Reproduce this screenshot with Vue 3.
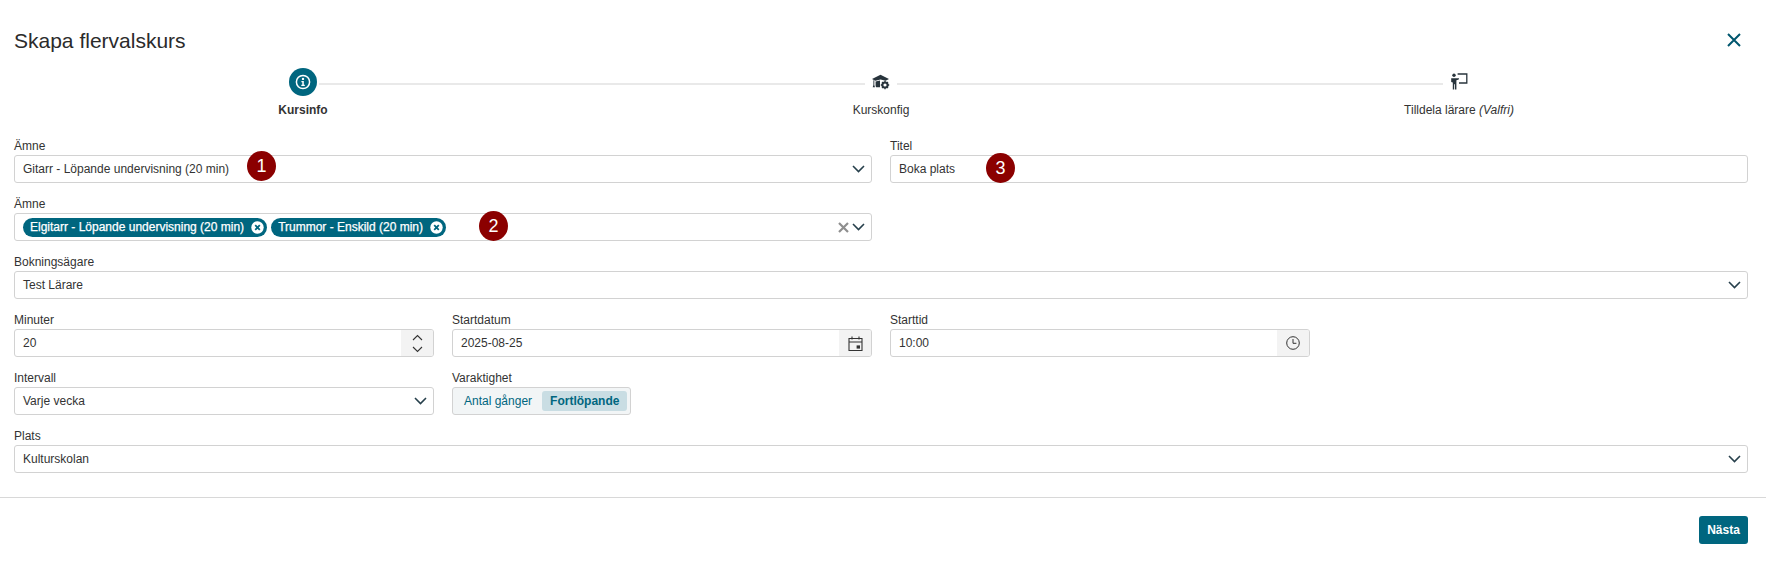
<script setup>
const steps = [
  { label: 'Kursinfo', icon: 'info', active: true },
  { label: 'Kurskonfig', icon: 'cap' },
  { label: 'Tilldela lärare', note: '(Valfri)', icon: 'teacher' },
]
const chips = ['Elgitarr - Löpande undervisning (20 min)', 'Trummor - Enskild (20 min)']
</script>

<template>
  <div class="page">
    <header class="head">
      <h1>Skapa flervalskurs</h1>
      <button class="close" aria-label="Stäng">
        <svg width="14" height="14" viewBox="0 0 14 14"><path d="M1 1l12 12M13 1L1 13" /></svg>
      </button>
    </header>

    <ol class="steps">
      <li v-for="(s, i) in steps" :key="s.label" class="step" :class="{ active: s.active }">
        <div class="marker">
          <span v-if="s.icon === 'info'" class="dot">
            <svg width="16" height="16" viewBox="0 0 16 16">
              <circle cx="8" cy="8" r="6.6" fill="none" stroke="#fff" stroke-width="1.5" />
              <circle cx="8" cy="4.9" r="1.2" fill="#fff" />
              <path d="M6.4 7h2.4v3.8h1v1.2H6.3v-1.2h1V8.2h-.9z" fill="#fff" />
            </svg>
          </span>
          <span v-else-if="s.icon === 'cap'" class="plain">
            <svg width="20" height="16" viewBox="0 0 20 16">
              <path d="M1 5 9.5 .8 18 5l-3.4 1.7-5.1-1.2-5.1 1.2L1 5z" fill="#28343c" />
              <path d="M4.6 7.4 9 6.5v6.7H5.2c-.4-.4-.6-.8-.6-1.4V7.4zM2.4 6.2h.9v4.8l.7 2.2H1.7l.7-2.2V6.2z" fill="#28343c" />
              <circle cx="14" cy="11" r="2.6" fill="none" stroke="#28343c" stroke-width="2" />
              <path d="M14 6.8v1.6M14 13.6v1.6M9.8 11h1.6M16.6 11h1.6M11 8l1.1 1.1M15.9 12.9 17 14M17 8l-1.1 1.1M12.1 12.9 11 14" stroke="#28343c" stroke-width="1.3" />
            </svg>
          </span>
          <span v-else class="plain teacher">
            <svg width="18" height="17" viewBox="0 0 18 17">
              <circle cx="4" cy="2.3" r="1.7" fill="#28343c" />
              <path d="M1.2 5.2h6.6l1-.3v1.5l-2.4.8v9.3H5v-5.3h-.8v5.3H2.8V9.4l-1.6-.4z" fill="#28343c" />
              <path d="M7.6 1h9.2v9H9" fill="none" stroke="#28343c" stroke-width="1.3" />
            </svg>
          </span>
          <span v-if="i < steps.length - 1" class="line"></span>
        </div>
        <div class="step-label">{{ s.label }} <em v-if="s.note">{{ s.note }}</em></div>
      </li>
    </ol>

    <form class="form" @submit.prevent>
      <div class="field span2">
        <label>Ämne</label>
        <div class="control select">
          <span class="value">Gitarr - Löpande undervisning (20 min)</span>
          <svg class="chev" width="13" height="8" viewBox="0 0 13 8"><path d="M1 1l5.5 5.5L12 1" /></svg>
        </div>
        <span class="mark m1">1</span>
      </div>
      <div class="field span2">
        <label>Titel</label>
        <div class="control"><span class="value">Boka plats</span></div>
        <span class="mark m3">3</span>
      </div>

      <div class="field span2">
        <label>Ämne</label>
        <div class="control select multi">
          <span class="chips">
            <span v-for="c in chips" :key="c" class="chip">
              {{ c }}
              <svg width="13" height="13" viewBox="0 0 13 13">
                <circle cx="6.5" cy="6.5" r="6.2" fill="#fff" />
                <path d="M4.2 4.2l4.6 4.6M8.8 4.2 4.2 8.8" stroke="#00667f" stroke-width="1.8" />
              </svg>
            </span>
          </span>
          <svg class="clear" width="11" height="11" viewBox="0 0 11 11"><path d="M1 1l9 9M10 1l-9 9" /></svg>
          <svg class="chev" width="13" height="8" viewBox="0 0 13 8"><path d="M1 1l5.5 5.5L12 1" /></svg>
        </div>
        <span class="mark m2">2</span>
      </div>
      <div class="field span2"></div>

      <div class="field span4">
        <label>Bokningsägare</label>
        <div class="control select">
          <span class="value">Test Lärare</span>
          <svg class="chev" width="13" height="8" viewBox="0 0 13 8"><path d="M1 1l5.5 5.5L12 1" /></svg>
        </div>
      </div>

      <div class="field">
        <label>Minuter</label>
        <div class="control addon-wrap">
          <span class="value">20</span>
          <span class="addon spin">
            <svg width="11" height="7" viewBox="0 0 11 7"><path d="M1 6l4.5-4.5L10 6" /></svg>
            <svg width="11" height="7" viewBox="0 0 11 7"><path d="M1 1l4.5 4.5L10 1" /></svg>
          </span>
        </div>
      </div>
      <div class="field">
        <label>Startdatum</label>
        <div class="control addon-wrap">
          <span class="value">2025-08-25</span>
          <span class="addon">
            <svg width="15" height="15" viewBox="0 0 15 15">
              <path d="M1 2.5h13v12H1zM1 6h13M4 .5v3M11 .5v3" fill="none" stroke="#333" stroke-width="1.1" />
              <rect x="8.6" y="9.4" width="3.4" height="3.2" fill="#333" />
            </svg>
          </span>
        </div>
      </div>
      <div class="field">
        <label>Starttid</label>
        <div class="control addon-wrap">
          <span class="value">10:00</span>
          <span class="addon">
            <svg width="14" height="14" viewBox="0 0 14 14">
              <circle cx="7" cy="7" r="6.3" fill="none" stroke="#333" stroke-width="1" />
              <path d="M7 3v4.3h3.4" fill="none" stroke="#333" stroke-width="1" />
            </svg>
          </span>
        </div>
      </div>
      <div class="field"></div>

      <div class="field">
        <label>Intervall</label>
        <div class="control select">
          <span class="value">Varje vecka</span>
          <svg class="chev" width="13" height="8" viewBox="0 0 13 8"><path d="M1 1l5.5 5.5L12 1" /></svg>
        </div>
      </div>
      <div class="field span3">
        <label>Varaktighet</label>
        <div class="segment">
          <span class="seg">Antal gånger</span>
          <span class="seg on">Fortlöpande</span>
        </div>
      </div>

      <div class="field span4">
        <label>Plats</label>
        <div class="control select">
          <span class="value">Kulturskolan</span>
          <svg class="chev" width="13" height="8" viewBox="0 0 13 8"><path d="M1 1l5.5 5.5L12 1" /></svg>
        </div>
      </div>
    </form>

    <footer class="foot">
      <button class="next">Nästa</button>
    </footer>
  </div>
</template>

<style>
html, body { margin: 0; background: #fff; }
</style>

<style scoped>
.page {
  font-family: "Liberation Sans", Arial, sans-serif;
  font-size: 12px;
  color: #333;
  width: 1766px;
  height: 561px;
  overflow: hidden;
  box-sizing: border-box;
}
.head {
  height: 68px;
  padding: 32px 25px 18px 14px;
  box-sizing: border-box;
  display: flex;
  align-items: center;
  justify-content: space-between;
}
h1 {
  margin: 0;
  font-size: 21px;
  font-weight: 400;
  color: #2b2b2b;
}
.close {
  border: 0;
  background: none;
  padding: 0;
  margin-bottom: 3px;
  display: flex;
}
.close path { stroke: #00566e; stroke-width: 2; fill: none; }
.steps {
  list-style: none;
  margin: 0;
  padding: 0 18px 0 14px;
  display: grid;
  grid-template-columns: repeat(3, 1fr);
  height: 71px;
}
.step { display: flex; flex-direction: column; align-items: center; }
.marker {
  position: relative;
  height: 28px;
  width: 100%;
  display: flex;
  justify-content: center;
  align-items: center;
}
.dot {
  width: 28px;
  height: 28px;
  border-radius: 50%;
  background: #00667f;
  display: flex;
  align-items: center;
  justify-content: center;
}
.plain { display: flex; align-items: center; justify-content: center; width: 28px; height: 28px; }
.teacher { padding-bottom: 1px; box-sizing: border-box; }
.line {
  position: absolute;
  left: calc(50% + 16px);
  width: calc(100% - 32px);
  top: 15px;
  height: 2px;
  background: #e9e9e9;
}
.step-label { margin-top: 7px; line-height: 14px; color: #333; }
.step.active .step-label { font-weight: 700; }
.step-label em { font-style: italic; }
.form {
  padding: 0 18px 0 14px;
  display: grid;
  grid-template-columns: repeat(4, 1fr);
  column-gap: 18px;
  row-gap: 14px;
}
.field { position: relative; min-width: 0; }
.span2 { grid-column: span 2; }
.span3 { grid-column: span 3; }
.span4 { grid-column: span 4; }
label { display: block; line-height: 14px; height: 16px; color: #333; }
.control {
  height: 28px;
  box-sizing: border-box;
  border: 1px solid #d2d2d2;
  border-radius: 3px;
  background: #fff;
  display: flex;
  align-items: center;
  padding-left: 8px;
}
.value { flex: 1; color: #333; }
.select { padding-right: 6px; }
.chev path { fill: none; stroke: #27404c; stroke-width: 1.6; }
.chips { flex: 1; display: flex; gap: 4px; }
.chip {
  height: 19px;
  display: inline-flex;
  align-items: center;
  gap: 7px;
  padding: 0 3px 0 7px;
  background: #00667f;
  color: #fff;
  border-radius: 10px;
  -webkit-text-stroke: 0.25px #fff;
}
.clear { margin-right: 3px; }
.clear path { stroke: #8f8f8f; stroke-width: 2.2; fill: none; }
.addon-wrap { padding-right: 0; }
.addon {
  width: 32px;
  height: 100%;
  background: #f3f3f3;
  display: flex;
  flex-direction: column;
  align-items: center;
  justify-content: center;
  border-radius: 0 2px 2px 0;
}
.spin { gap: 5px; }
.spin path { fill: none; stroke: #333; stroke-width: 1.1; }
.segment {
  height: 28px;
  width: 179px;
  box-sizing: border-box;
  border: 1px solid #d2d2d2;
  border-radius: 3px;
  background: #f2f5f6;
  padding: 3px;
  display: flex;
  gap: 2px;
  white-space: nowrap;
}
.seg {
  display: flex;
  align-items: center;
  padding: 0 8px;
  color: #00667f;
  border-radius: 3px;
}
.seg.on { background: #c9dde3; font-weight: 700; }
.mark {
  position: absolute;
  width: 29px;
  height: 30px;
  border-radius: 50%;
  background: #8b0000;
  color: #fff;
  font-size: 18px;
  display: flex;
  align-items: center;
  justify-content: center;
}
.m1 { left: 233px; top: 12px; }
.m2 { left: 465px; top: 14px; }
.m3 { left: 96px; top: 14px; }
.foot {
  margin-top: 24px;
  border-top: 1px solid #d8d8d8;
  padding: 18px 18px 0 0;
  display: flex;
  justify-content: flex-end;
}
.next {
  width: 49px;
  height: 28px;
  border: 0;
  border-radius: 3px;
  background: #00667f;
  color: #fff;
  font: 700 12px "Liberation Sans", Arial, sans-serif;
  padding: 0;
}
</style>
